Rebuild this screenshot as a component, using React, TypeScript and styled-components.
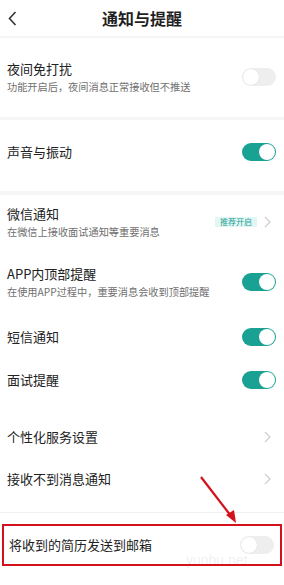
import styled, { createGlobalStyle } from 'styled-components';

const GlobalStyle = createGlobalStyle`
  body {
    margin: 0;
    background: #ffffff;
    font-family: "Noto Sans CJK SC", "Noto Sans", sans-serif;
    color: #222222;
  }
`;

const Page = styled.div`
  position: relative;
  width: 284px;
  height: 585px;
  overflow: hidden;
  background: #ffffff;
`;

const Header = styled.header`
  display: grid;
  grid-template-columns: 40px 1fr 40px;
  align-items: center;
  height: 36px;
  border-bottom: 2px solid #f4f4f4;
`;

const Back = styled.div`
  display: flex;
  align-items: center;
  padding-left: 8px;
`;

const Title = styled.h1`
  margin: 0;
  text-align: center;
  font-size: 16px;
  font-weight: 700;
  color: #1f1f1f;
`;

type Tone = 'gray' | 'blank' | 'line';

const Band = styled.div<{ $h: number; $tone: Tone }>`
  height: ${(p) => p.$h}px;
  background: ${(p) => (p.$tone === 'gray' ? '#f6f6f6' : '#ffffff')};
  display: flex;
  align-items: center;
  &::after {
    content: '';
    display: ${(p) => (p.$tone === 'line' ? 'block' : 'none')};
    width: 100%;
    height: 1px;
    background: #eef2f2;
  }
`;

const Row = styled.div<{ $top: number; $bottom: number; $boxed?: boolean }>`
  display: flex;
  align-items: center;
  justify-content: space-between;
  padding: ${(p) => p.$top}px 8px ${(p) => p.$bottom}px 7px;
  ${(p) =>
    p.$boxed &&
    `
    margin: 0 2px;
    padding-left: 5px;
    padding-right: 6px;
    border: 2px solid #d3111b;
  `}
`;

const Texts = styled.div`
  display: flex;
  flex-direction: column;
  gap: 2px;
`;

const Label = styled.div`
  font-size: 13px;
  line-height: 18px;
  color: #222222;
`;

const Sub = styled.div`
  font-size: 10.2px;
  line-height: 14px;
  color: #6f6f6f;
  white-space: nowrap;
`;

const Switch = styled.div<{ $on?: boolean }>`
  position: relative;
  width: 34px;
  height: 18px;
  border-radius: 9px;
  background: ${(p) => (p.$on ? '#19a293' : '#eeeeee')};
  flex-shrink: 0;
  &::after {
    content: '';
    position: absolute;
    top: 1px;
    left: ${(p) => (p.$on ? '17px' : '1px')};
    width: 16px;
    height: 16px;
    border-radius: 50%;
    background: #ffffff;
    box-shadow: ${(p) => (p.$on ? 'none' : '0 0 1px rgba(0,0,0,0.15)')};
  }
`;

const Trail = styled.div`
  display: flex;
  align-items: center;
  gap: 7px;
  padding-right: 5px;
`;

const Badge = styled.span`
  font-size: 8px;
  line-height: 10px;
  padding: 0 5px;
  background: #e2f6f3;
  color: #1b9f95;
  border-radius: 1px;
`;

const Watermark = styled.div`
  position: absolute;
  left: 186px;
  top: 552px;
  font-family: "Liberation Sans", sans-serif;
  font-size: 14px;
  color: rgba(120, 120, 120, 0.13);
  pointer-events: none;
`;

const ArrowLayer = styled.svg`
  position: absolute;
  left: 0;
  top: 0;
  pointer-events: none;
`;

const Chevron = () => (
  <svg width="7" height="12" viewBox="0 0 7 12">
    <path d="M1 1 L6 6 L1 11" fill="none" stroke="#cfcfcf" strokeWidth="1.3" />
  </svg>
);

export default function App() {
  return (
    <Page>
      <GlobalStyle />
      <Header>
        <Back>
          <svg width="9" height="15" viewBox="0 0 9 15">
            <path d="M7.5 1 L1.5 7.5 L7.5 14" fill="none" stroke="#333" strokeWidth="1.6" />
          </svg>
        </Back>
        <Title>通知与提醒</Title>
        <span />
      </Header>

      <Row $top={22} $bottom={23}>
        <Texts>
          <Label>夜间免打扰</Label>
          <Sub>功能开启后，夜间消息正常接收但不推送</Sub>
        </Texts>
        <Switch />
      </Row>
      <Band $h={3} $tone="gray" />

      <Row $top={23} $bottom={30}>
        <Label>声音与振动</Label>
        <Switch $on />
      </Row>
      <Band $h={4} $tone="gray" />

      <Row $top={10} $bottom={16}>
        <Texts>
          <Label>微信通知</Label>
          <Sub>在微信上接收面试通知等重要消息</Sub>
        </Texts>
        <Trail>
          <Badge>推荐开启</Badge>
          <Chevron />
        </Trail>
      </Row>
      <Row $top={10} $bottom={17}>
        <Texts>
          <Label>APP内顶部提醒</Label>
          <Sub>在使用APP过程中，重要消息会收到顶部提醒</Sub>
        </Texts>
        <Switch $on />
      </Row>
      <Row $top={12} $bottom={13}>
        <Label>短信通知</Label>
        <Switch $on />
      </Row>
      <Row $top={12} $bottom={13}>
        <Label>面试提醒</Label>
        <Switch $on />
      </Row>
      <Band $h={14} $tone="blank" />

      <Row $top={12} $bottom={12}>
        <Label>个性化服务设置</Label>
        <Trail>
          <Chevron />
        </Trail>
      </Row>
      <Row $top={12} $bottom={13}>
        <Label>接收不到消息通知</Label>
        <Trail>
          <Chevron />
        </Trail>
      </Row>
      <Band $h={23} $tone="line" />

      <Row $top={10} $bottom={10} $boxed>
        <Label>将收到的简历发送到邮箱</Label>
        <Switch />
      </Row>

      <Watermark>yunhu.net</Watermark>
      <ArrowLayer width="284" height="585" viewBox="0 0 284 585">
        <line x1="201" y1="477" x2="231" y2="516" stroke="#d3111b" strokeWidth="2.2" />
        <polygon points="236,523 226,515 234,510" fill="#d3111b" />
      </ArrowLayer>
    </Page>
  );
}
